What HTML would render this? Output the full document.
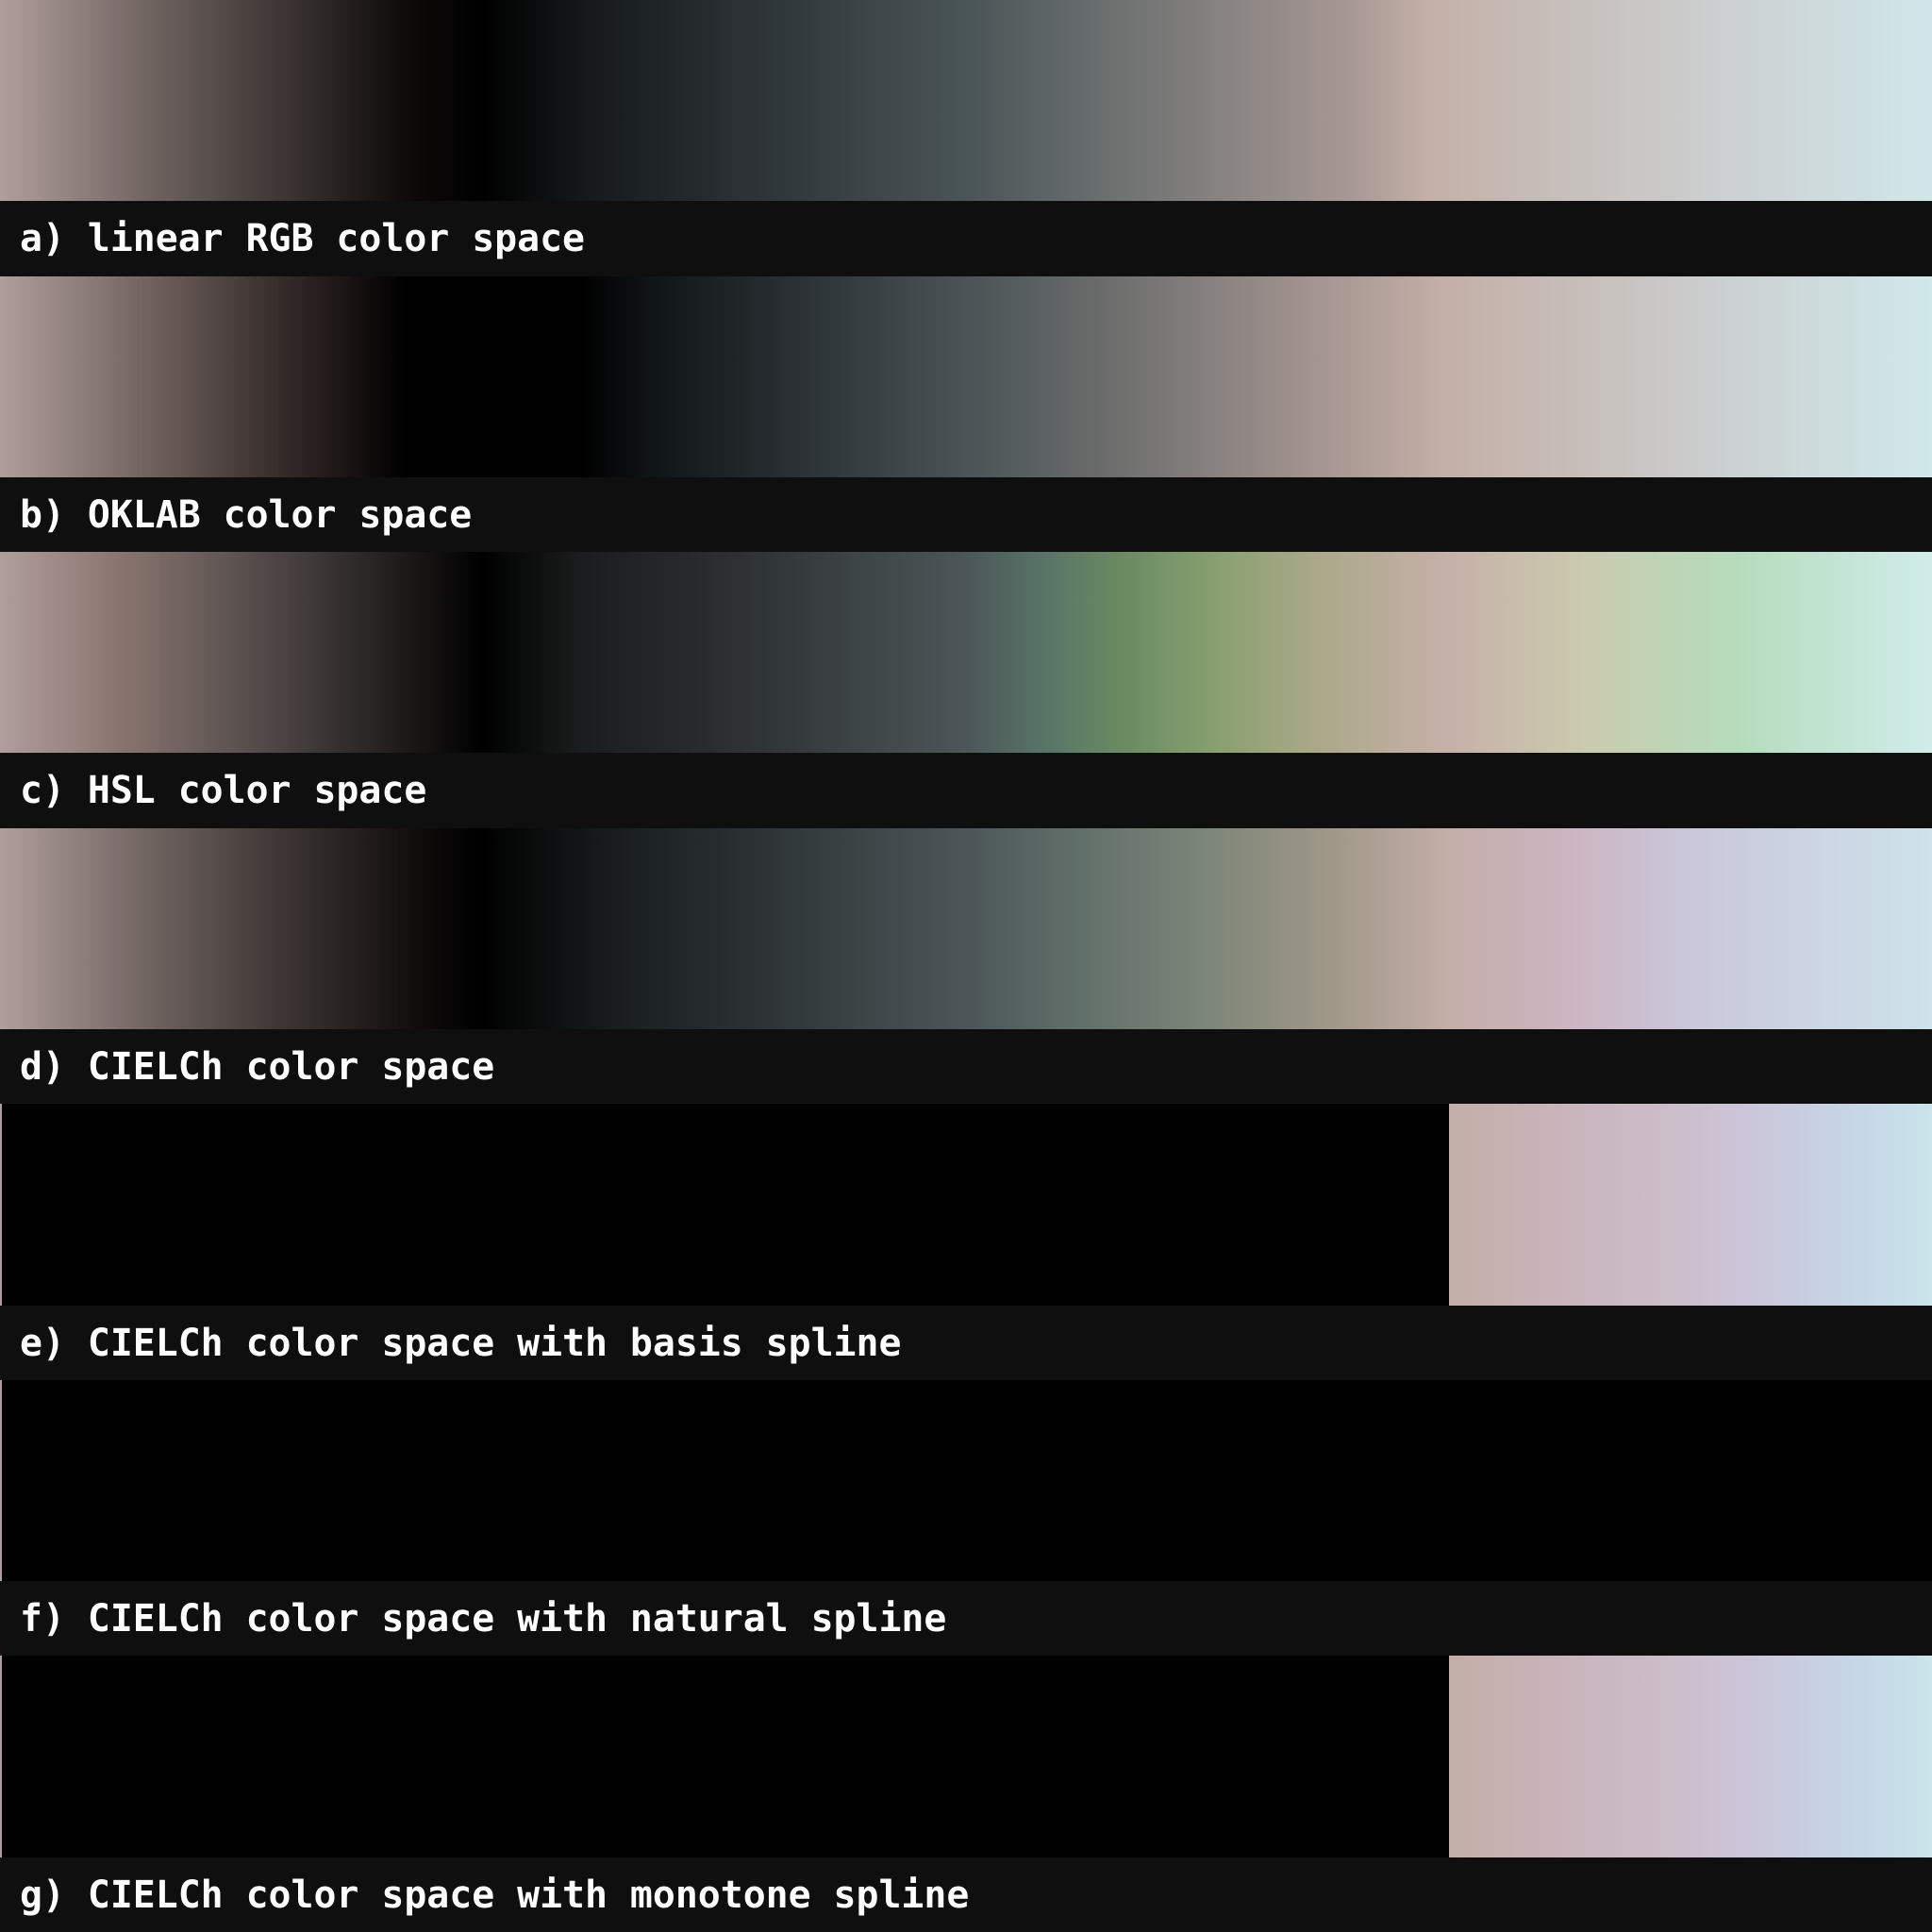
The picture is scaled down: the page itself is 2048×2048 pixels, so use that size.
<!DOCTYPE html>
<html><head><meta charset="utf-8"><style>
html,body{margin:0;padding:0;background:#0f0f0f;width:2048px;height:2048px;overflow:hidden}
.row{position:absolute;left:0;width:2048px;height:292.571px}
.g{position:absolute;left:0;top:0;width:2048px;height:213.3px}
.l{position:absolute;left:0;top:213.3px;width:2048px;height:79.3px;background:#0f0f0f}
.t{position:absolute;left:21px;top:16px;font-family:"DejaVu Sans Mono","Liberation Mono",monospace;font-weight:bold;font-size:39.8px;color:#fff;white-space:pre;line-height:48px}
.edge{position:absolute;left:0;top:0;width:2px;height:213.3px;background:#b09e9c}
</style></head><body>
<div class="row" style="top:0">
<div class="g" style="background:linear-gradient(90deg,#b09e9c 0%,#6e625f 8%,#3a3331 15%,#0e0b0a 21%,#000 25%,#141819 30%,#2a3033 38%,#4a5557 50%,#6e7271 58%,#8a8583 64%,#a89894 70%,#c4b0a8 74%,#c6bdb8 80%,#cbcdcd 88%,#d0e6ea 100%)"></div>
<div class="l"><div class="t">a) linear RGB color space</div></div></div>
<div class="row" style="top:292.571px">
<div class="g" style="background:linear-gradient(90deg,#b09e9c 0%,#6e605d 8%,#3a302e 14%,#1a1413 18%,#000 21%,#000 30%,#111618 34%,#2a3033 41%,#4a5456 50%,#6a6c6b 57%,#888280 63%,#a89792 69%,#c4b0a8 75%,#c6bcb7 81%,#cbcfcf 89%,#d0e8ea 100%)"></div>
<div class="l"><div class="t">b) OKLAB color space</div></div></div>
<div class="row" style="top:585.143px">
<div class="g" style="background:linear-gradient(90deg,#b09e9c 0%,#8a7670 6%,#5e5452 12%,#2a2725 19%,#000 25%,#1a1d1d 30%,#2c3031 38%,#4c5658 50%,#587468 54%,#6a8a62 58%,#88a070 63%,#aaa888 68%,#c6b0a8 75%,#cacaae 82%,#b4dcbc 90%,#d0ecea 100%)"></div>
<div class="l"><div class="t">c) HSL color space</div></div></div>
<div class="row" style="top:877.714px">
<div class="g" style="background:linear-gradient(90deg,#b09e9c 0%,#6e625f 8%,#3a3331 15%,#0e0b0a 22%,#000 25%,#161a1b 31%,#2c3234 39%,#4c5658 50%,#62706a 56%,#7a8478 62%,#a09888 69%,#c4aea8 75%,#ccb4c0 81%,#cac8dc 88%,#cde2ea 100%)"></div>
<div class="l"><div class="t">d) CIELCh color space</div></div></div>
<div class="row" style="top:1170.286px">
<div class="g" style="background:linear-gradient(90deg,#000 0%,#000 75%,#c3aea8 75%,#c8b3b8 80%,#ccbcc8 86%,#cbc7db 91%,#c6d6e6 96%,#c9e4ea 100%)"></div><div class="edge"></div>
<div class="l"><div class="t">e) CIELCh color space with basis spline</div></div></div>
<div class="row" style="top:1462.857px">
<div class="g" style="background:#000"></div><div class="edge"></div>
<div class="l"><div class="t">f) CIELCh color space with natural spline</div></div></div>
<div class="row" style="top:1755.429px">
<div class="g" style="background:linear-gradient(90deg,#000 0%,#000 75%,#c3aea8 75%,#c8b3b8 80%,#ccbcc8 86%,#cbc7db 91%,#c6d6e6 96%,#c9e4ea 100%)"></div><div class="edge"></div>
<div class="l"><div class="t">g) CIELCh color space with monotone spline</div></div></div>
</body></html>
